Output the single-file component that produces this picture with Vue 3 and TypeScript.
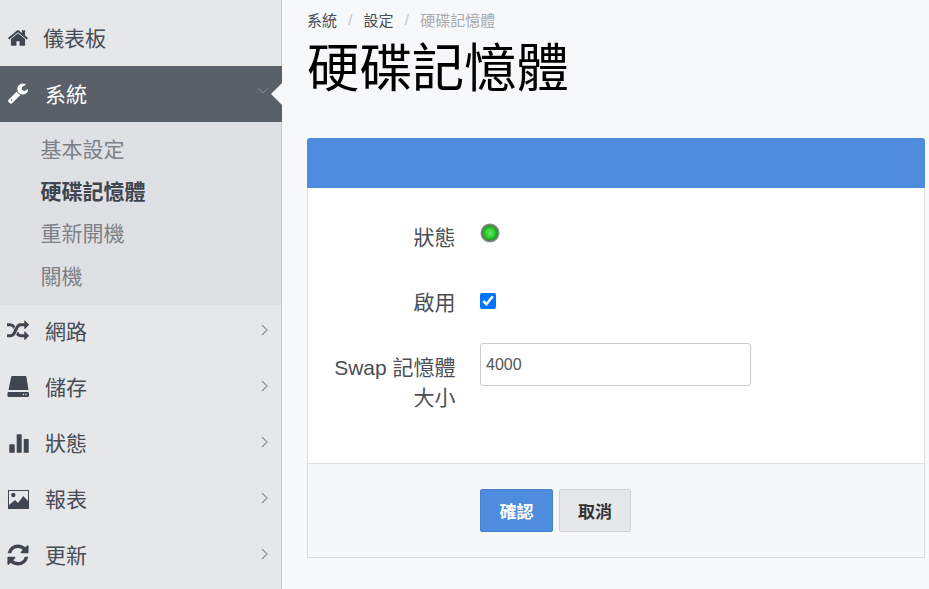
<script setup lang="ts">
const paths: Record<string, string> = {
  home: 'M1472 992v480q0 26-19 45t-45 19h-384v-384h-256v384h-384q-26 0-45-19t-19-45v-480q0-1 .5-3t.5-3l575-474 575 474q1 2 1 6zm223-69l-62 74q-8 9-21 11h-3q-13 0-21-7l-692-577-692 577q-12 8-24 7-13-2-21-11l-62-74q-8-10-7-23.5t11-21.5l719-599q32-26 76-26t76 26l244 204v-195q0-14 9-23t23-9h192q14 0 23 9t9 23v408l219 182q10 8 11 21.5t-7 23.5z',
  wrench: 'M448 1472q0-26-19-45t-45-19-45 19-19 45 19 45 45 19 45-19 19-45zm644-420l-682 682q-37 37-90 37-52 0-91-37l-106-108q-38-36-38-90 0-53 38-91l681-681q39 98 114.5 173.5t173.5 114.5zm634-435q0 39-23 106-47 134-164.5 217.5t-258.5 83.5q-185 0-316.5-131.5t-131.5-316.5 131.5-316.5 316.5-131.5q58 0 121.5 16.5t107.5 46.5q16 11 16 28t-16 28l-293 169v224l193 107q5-3 79-48.5t135.5-81 70.5-35.5q15 0 23.5 10t8.5 25z',
  random: 'M666 481q-60 92-137 273-22-45-37-72.5t-40.5-63.5-51-56.5-63-35-81.5-14.5h-224q-14 0-23-9t-9-23v-192q0-14 9-23t23-9h224q250 0 410 225zm1126 799q0 14-9 23l-320 320q-9 9-23 9-13 0-22.5-9.5t-9.5-22.5v-192q-32 0-85 .5t-81 1-73-1-71-5-64-10.5-63-18.5-58-28.5-59-40-55-53.5-56-69.5q59-93 136-273 22 45 37 72.5t40.5 63.5 51 56.5 63 35 81.5 14.5h256v-192q0-14 9-23t23-9q12 0 24 10l319 319q9 9 9 23zm0-896q0 14-9 23l-320 320q-9 9-23 9-13 0-22.5-9.5t-9.5-22.5v-192h-256q-48 0-87 15t-69 45-51 61.5-45 77.5q-32 62-78 171-29 66-49.5 111t-54 105-64 100-74 83-90 68.5-106.5 42-128 16.5h-224q-14 0-23-9t-9-23v-192q0-14 9-23t23-9h224q48 0 87-15t69-45 51-61.5 45-77.5q32-62 78-171 29-66 49.5-111t54-105 64-100 74-83 90-68.5 106.5-42 128-16.5h256v-192q0-14 9-23t23-9q12 0 24 10l319 319q9 9 9 23z',
  hdd: 'M420 0H1500Q1560 0 1580 70L1750 1140H122L340 70Q360 0 420 0ZM140 1303H1690Q1792 1303 1792 1400V1610Q1792 1710 1690 1710H140Q40 1710 40 1610V1400Q40 1303 140 1303ZM1280 1507A60 60 0 1 0 1400 1507A60 60 0 1 0 1280 1507ZM1480 1507A60 60 0 1 0 1600 1507A60 60 0 1 0 1480 1507Z',
  chart: 'M237 1002H577Q627 1002 627 1052V1686H187V1052Q187 1002 237 1002ZM840 187H1147Q1197 187 1197 237V1686H790V237Q790 187 840 187ZM1410 570H1717Q1767 570 1767 620V1686H1360V620Q1360 570 1410 570Z',
  image: 'M81 163H1792V1710H81ZM163 244V1385L652 977L896 1222L1328 652L1710 1059V244ZM333 570A180 180 0 1 0 693 570A180 180 0 1 0 333 570Z',
  refresh: 'M1639 1056q0 5-1 7-64 268-268 434.5t-478 166.5q-146 0-282.5-55t-243.5-157l-129 129q-19 19-45 19t-45-19-19-45v-448q0-26 19-45t45-19h448q26 0 45 19t19 45-19 45l-137 137q71 66 161 102t187 36q134 0 250-65t186-179q11-17 53-117 8-23 30-23h192q13 0 22.5 9.5t9.5 22.5zm25-800v448q0 26-19 45t-45 19h-448q-26 0-45-19t-19-45 19-45l138-138q-148-137-349-137-134 0-250 65t-186 179q-11 17-53 117-8 23-30 23h-199q-13 0-22.5-9.5t-9.5-22.5v-7q65-268 270-434.5t480-166.5q146 0 284 55.5t245 156.5l130-129q19-19 45-19t45 19 19 45z',
}
const subs = [
  { label: '基本設定', on: false },
  { label: '硬碟記憶體', on: true },
  { label: '重新開機', on: false },
  { label: '關機', on: false },
]
const rest = [
  { label: '網路', icon: 'random', box: '0 0 1792 1792' },
  { label: '儲存', icon: 'hdd', box: '0 0 1792 1792' },
  { label: '狀態', icon: 'chart', box: '0 0 1792 1792' },
  { label: '報表', icon: 'image', box: '0 0 1792 1792' },
  { label: '更新', icon: 'refresh', box: '96 96 1600 1600' },
]
</script>

<template>
  <div class="page">
    <aside class="side">
      <a class="item first">
        <svg class="ico" viewBox="0 0 1792 1792"><path :d="paths.home" /></svg>
        <span class="first-label">儀表板</span>
      </a>
      <a class="item active">
        <svg class="ico" viewBox="0 0 1792 1792"><path :d="paths.wrench" /></svg>
        <span class="label">系統</span>
        <svg class="chev down" viewBox="0 0 10 6"><path d="M.5.5L5 5 9.500.5" /></svg>
        <i class="notch"></i>
      </a>
      <div class="subs">
        <a v-for="s in subs" :key="s.label" class="sub" :class="{ on: s.on }">{{ s.label }}</a>
      </div>
      <a v-for="r in rest" :key="r.label" class="item lower">
        <svg class="ico" :viewBox="r.box"><path :d="paths[r.icon]" fill-rule="evenodd" /></svg>
        <span class="label">{{ r.label }}</span>
        <svg class="chev right" viewBox="0 0 8 12"><path d="M1 1l5 5-5 5" /></svg>
      </a>
    </aside>
    <main class="main">
      <nav class="crumbs">
        <span>系統</span><i>/</i><span>設定</span><i>/</i><span class="cur">硬碟記憶體</span>
      </nav>
      <h1 class="title">硬碟記憶體</h1>
      <section class="panel">
        <div class="panel-head"></div>
        <div class="panel-body">
          <div class="row r1">
            <label class="lab">狀態</label>
            <div class="val"><span class="led"></span></div>
          </div>
          <div class="row r2">
            <label class="lab">啟用</label>
            <div class="val"><input class="chk" type="checkbox" checked /></div>
          </div>
          <div class="row r3">
            <label class="lab swap">Swap 記憶體<br />大小</label>
            <div class="val"><input class="txt" type="text" value="4000" /></div>
          </div>
        </div>
        <div class="panel-foot">
          <button class="btn primary">確認</button>
          <button class="btn">取消</button>
        </div>
      </section>
    </main>
  </div>
</template>

<style>
html, body { margin: 0; background: #f7f8fa; overflow: hidden; }
</style>

<style scoped>
.page {
  display: flex;
  width: 929px;
  height: 589px;
  overflow: hidden;
  font-family: "Liberation Sans", "Noto Sans CJK TC", sans-serif;
  color: #3f444d;
}
.side {
  width: 281px;
  flex: none;
  padding-top: 10px;
  background: #e6e7e9;
  border-right: 1px solid #c8cacd;
}
.item {
  position: relative;
  display: flex;
  align-items: center;
  height: 56px;
  box-sizing: border-box;
  padding-left: 7px;
  font-size: 21px;
  color: #474c55;
}
.lower { padding-bottom: 4px; }
.ico { width: 22px; height: 22px; flex: none; fill: #3f4650; }
.first-label { margin: 0 0 2px 14px; }
.label { margin: 0 0 2px 16px; }
.active { background: #596069; color: #fff; margin-right: -1px; }
.active .ico { fill: #fff; margin-bottom: 2px; }
.chev { position: absolute; fill: none; stroke: #8f949a; stroke-width: 1.2; }
.chev.right { right: 12px; top: 19px; width: 8px; height: 12px; }
.chev.down { right: 14px; top: 22px; width: 10px; height: 6px; stroke: #8b9097; stroke-width: 1; }
.notch {
  position: absolute;
  right: 0;
  top: 17px;
  border: 11px solid transparent;
  border-right-color: #f7f8fa;
  border-left-width: 0;
}
.subs { background: #dfe0e3; padding: 6.8px 0 0; height: 183px; box-sizing: border-box; }
.sub {
  display: block;
  height: 42.3px;
  line-height: 42px;
  padding-left: 40.5px;
  font-size: 21px;
  color: #7d8187;
}
.sub.on { color: #3f444d; font-weight: 700; }
.main { flex: 1; padding-left: 25px; padding-right: 4px; min-width: 0; }
.crumbs {
  display: flex;
  align-items: center;
  height: 20px;
  margin-top: 9px;
  font-size: 15px;
  color: #494d55;
}
.crumbs i { font-style: normal; color: #c4c6ca; margin: 0 11.2px; }
.crumbs .cur { color: #a9abaf; }
.title {
  margin: 5px 0 0;
  font-size: 52.4px;
  line-height: 70px;
  font-weight: 400;
  color: #000;
}
.panel {
  margin-top: 34px;
  border: 1px solid #dcdddf;
  border-top: 0;
  border-radius: 3px 3px 0 0;
  background: #f6f7f9;
}
.panel-head { height: 50px; margin: 0 -1px; background: #4e8ddd; border-radius: 3px 3px 0 0; }
.panel-body { height: 276px; background: #fff; border-bottom: 1px solid #dcdddf; box-sizing: border-box; padding-top: 36px; }
.row { display: flex; }
.lab {
  width: 147.500px;
  flex: none;
  margin-top: -1px;
  text-align: right;
  font-size: 21px;
  line-height: 30px;
  color: #4a4e55;
}
.r2 .lab { margin-top: -2px; }
.swap { padding-top: 11px; }
.val { margin-left: 24.500px; }
.r1 { height: 66px; }
.r2 { height: 53px; }
.led {
  display: block;
  width: 20px;
  height: 20px;
  margin-top: -1px;
  border-radius: 50%;
  background: radial-gradient(circle closest-side at 50% 50%, #62e862 0, #2fd02f 45%, #1fa81f 68%, #6a746a 78%, #8f938f 90%, #ffffff 100%);
}
.chk { display: block; width: 16px; height: 16px; margin: 3px 0 0; accent-color: #0075ff; }
.txt {
  display: block;
  width: 271px;
  height: 43px;
  box-sizing: border-box;
  padding: 0 5px;
  border: 1px solid #c9cbce;
  border-radius: 3px;
  font: 16px "Liberation Sans", sans-serif;
  color: #555;
  background: #fff;
  outline: 0;
}
.panel-foot { height: 93px; display: flex; align-items: flex-start; gap: 6px; padding: 25px 0 0 172px; box-sizing: border-box; }
.btn {
  height: 43px;
  width: 72px;
  padding: 0;
  border: 1px solid #d0d1d3;
  border-radius: 2px;
  background: #e6e7e9;
  color: #333;
  font: 700 17px "Liberation Sans", "Noto Sans CJK TC", sans-serif;
}
.primary { width: 73px; background: #4e8ddd; border-color: #4680c9; color: #fff; }
</style>
